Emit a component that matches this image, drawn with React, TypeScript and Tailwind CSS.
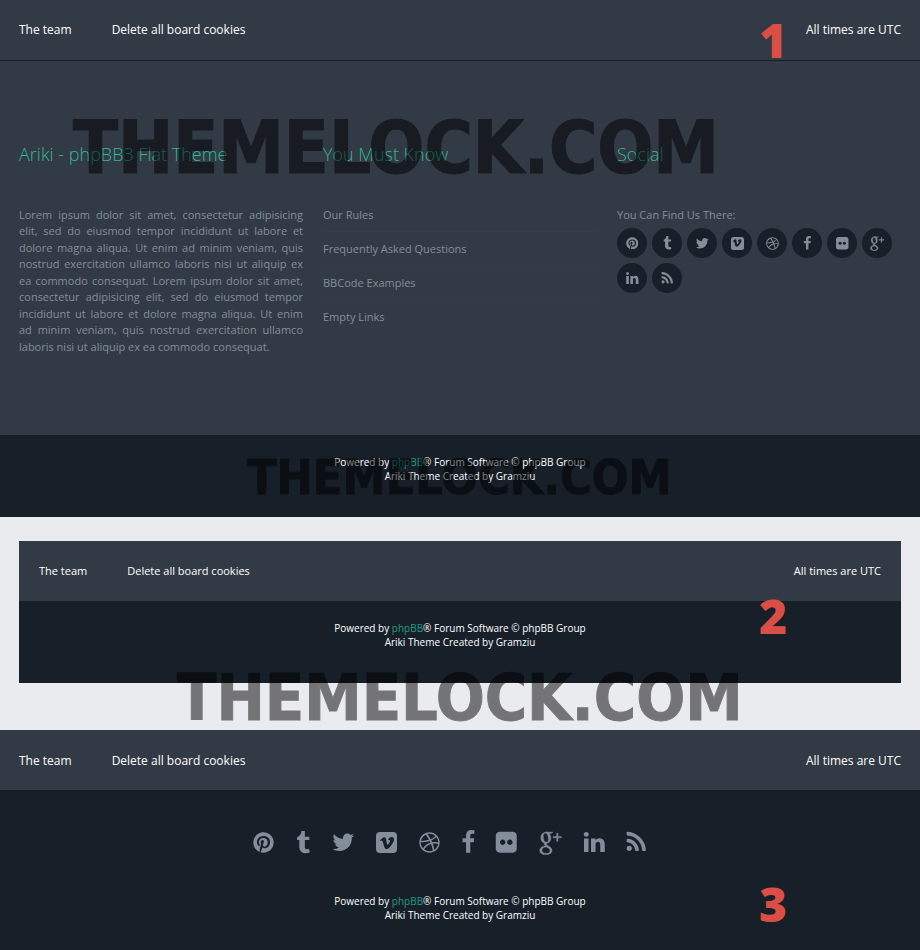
import type { ReactNode } from "react";
import { FaDribbble, FaPinterest, FaVimeoV } from "react-icons/fa";

const glyphs = {
  tumblr:
    "M1328 1329l80 237q-23 35-111 66t-177 32q-104 2-190.500-26t-142.500-74-95-106-55.500-120-16.500-118v-544h-168v-215q72-26 129-69.500t91-90 58-102 34-99 15-88.500q1-5 4.500-8.500t7.500-3.500h244v424h333v252h-334v518q0 30 6.500 56t22.500 52.500 49.500 41.500 81.500 14q78-2 134-29z",
  twitter:
    "M1684 408q-67 98-162 167 1 14 1 42 0 130-38 259.500t-115.500 248.500-184.500 210.500-258 146-323 54.500q-271 0-496-145 35 4 78 4 225 0 401-138-105-2-188-64.500t-114-159.500q33 5 61 5 43 0 85-11-112-23-185.500-111.500t-73.500-205.500v-4q68 38 146 41-66-44-105-115t-39-154q0-88 44-163 121 149 294.500 238.500t371.500 99.500q-8-38-8-74 0-134 94.500-228.500t228.500-94.500q140 0 236 102 109-21 205-78-37 115-142 178 93-10 186-50z",
  facebook:
    "M1343 12v264h-157q-86 0-116 36t-30 108v189h293l-39 296h-254v759h-306v-759h-255v-296h255v-218q0-186 104-288.500t277-102.500q147 0 228 12z",
  linkedin:
    "M477 625v991h-330v-991h330zm21-306q1 73-50.500 122t-135.500 49h-2q-82 0-132-49t-50-122q0-74 51.500-122.500t134.500-48.500 133 48.500 51 122.500zm1166 729v568h-329v-530q0-105-40.500-164.500t-126.500-59.500q-63 0-105.500 34.500t-63.500 85.500q-11 30-11 81v553h-329q2-399 2-647t-1-296l-1-48h329v144h-2q20-32 41-56t56.500-52 87-43.500 114.500-15.500q171 0 275 113.500t104 332.500z",
  rss: "M576 1344q0 80-56 136t-136 56-136-56-56-136 56-136 136-56 136 56 56 136zm512 123q2 28-17 48-18 21-47 21h-135q-25 0-43-16.500t-20-41.500q-22-229-184.500-391.500t-391.500-184.500q-25-2-41.500-20t-16.500-43v-135q0-29 21-47 17-17 43-17h5q160 13 306 80.500t259 181.500q114 113 181.500 259t80.500 306zm512 2q2 27-18 47-18 20-46 20h-143q-26 0-44.500-17.500t-19.500-42.500q-12-215-101-408.500t-231.500-336-336-231.500-408.500-102q-25-1-42.500-19.500t-17.500-43.500v-143q0-28 20-46 18-18 44-18h3q262 13 501.500 120t425.500 294q187 186 294 425.500t120 501.500z",
  flickr:
    "M416 128h960q119 0 203.500 84.500t84.500 203.500v960q0 119-84.500 203.500t-203.500 84.500h-960q-119 0-203.500-84.500t-84.500-203.500v-960q0-119 84.500-203.500t203.500-84.500zM634 696a200 200 0 1 0 0.100 0zM1158 696a200 200 0 1 0 0.100 0z",
};

function Glyph({ name, size }: { name: keyof typeof glyphs; size: number }) {
  return (
    <svg width={size} height={size} viewBox="0 0 1792 1792" fill="currentColor" fillRule="evenodd">
      <path d={glyphs[name]} />
    </svg>
  );
}

function Vimeo({ large = false }: { large?: boolean }) {
  return (
    <span
      className={`flex items-center justify-center bg-[#848e9a] text-[#171f29] ${
        large ? "size-[21px] rounded-[4px]" : "size-[13px] rounded-[2.500px]"
      }`}
    >
      <FaVimeoV size={large ? 16 : 10} />
    </span>
  );
}

function GooglePlus({ size }: { size: number }) {
  return (
    <svg
      width={size}
      height={size}
      viewBox="0 0 24 25"
      fill="currentColor"
      fillRule="evenodd"
      stroke="currentColor"
      strokeWidth="0.5"
    >
      <path d="M6.700 1.200C9.700 1.200 11.800 3.800 11.800 7.300S9.700 12.800 6.600 12.800 1.400 10.400 1.400 7 3.700 1.200 6.700 1.200zM6.200 2.200C4.700 2.200 3.900 3.700 3.900 6.200S5.200 11.800 7 11.800 9.400 10.400 9.400 8.200 8.200 2.200 6.200 2.200z" />
      <path d="M6.500 1.200H14L12.200 2.500H8.600z" />
      <path d="M5.500 12.300L7.800 12.500C6.500 13.800 7 14.300 9.300 15.700C11.800 17.200 13 18.200 13 20.200C13 22.800 10.600 24.600 6.400 24.600C2.600 24.600 0.300 23 0.300 20.500C0.300 17.600 2.800 15.700 6.500 15.600C4.800 14.600 4.600 13.400 5.500 12.300zM7.500 16.600C4.500 16.500 2.500 17.800 2.500 20C2.500 22.200 4.300 23.400 7 23.400C9.700 23.400 11 22.300 11 20.500C11 18.800 9.800 18.200 7.500 16.600z" />
      <path d="M17.900 2.300h1.300v3.500h3.600v1.300h-3.600v3.600h-1.300v-3.600h-3.600V5.800h3.600z" />
    </svg>
  );
}

type Social = { name: string; small: ReactNode; large: ReactNode; width: string };

const socials: Social[] = [
  { name: "Pinterest", small: <FaPinterest size={12.5} />, large: <FaPinterest size={21} />, width: "w-[21px]" },
  {
    name: "Tumblr",
    small: <Glyph name="tumblr" size={14.5} />,
    large: <Glyph name="tumblr" size={24} />,
    width: "w-[14px]",
  },
  {
    name: "Twitter",
    small: <Glyph name="twitter" size={14.5} />,
    large: <Glyph name="twitter" size={24.5} />,
    width: "w-[22px]",
  },
  { name: "Vimeo", small: <Vimeo />, large: <Vimeo large />, width: "w-[21px]" },
  { name: "Dribbble", small: <FaDribbble size={13} />, large: <FaDribbble size={21} />, width: "w-[21px]" },
  {
    name: "Facebook",
    small: <Glyph name="facebook" size={14.5} />,
    large: <Glyph name="facebook" size={24.5} />,
    width: "w-[12px]",
  },
  {
    name: "Flickr",
    small: <Glyph name="flickr" size={14.5} />,
    large: <Glyph name="flickr" size={24.5} />,
    width: "w-[21px]",
  },
  { name: "Google Plus", small: <GooglePlus size={15} />, large: <GooglePlus size={24} />, width: "w-[23px]" },
  {
    name: "LinkedIn",
    small: <Glyph name="linkedin" size={14.5} />,
    large: <Glyph name="linkedin" size={24.5} />,
    width: "w-[21px]",
  },
  { name: "RSS", small: <Glyph name="rss" size={14.5} />, large: <Glyph name="rss" size={24.5} />, width: "w-[19px]" },
];

const links = ["Our Rules", "Frequently Asked Questions", "BBCode Examples", "Empty Links"];

function NavBar({ className }: { className: string }) {
  return (
    <nav className={`flex h-[60px] items-center bg-[#323a45] text-white ${className}`}>
      <a className="mr-10">The team</a>
      <a>Delete all board cookies</a>
      <span className="ml-auto">All times are UTC</span>
    </nav>
  );
}

function Credits({ className }: { className: string }) {
  return (
    <div className={`bg-[#171f29] text-center text-[10px] leading-[14px] text-white ${className}`}>
      <p>
        Powered by <a className="text-[#1f9e7f]">phpBB</a>® Forum Software © phpBB Group
      </p>
      <p>Ariki Theme Created by Gramziu</p>
    </div>
  );
}

function Heading({ children }: { children: ReactNode }) {
  return <h3 className="mb-[41px] text-[18px] leading-6 font-light text-[#32b892]">{children}</h3>;
}

function Watermark({ className }: { className: string }) {
  return (
    <div
      className={`pointer-events-none absolute leading-none font-bold whitespace-nowrap text-black opacity-50 [font-family:'DejaVu_Sans_Condensed','DejaVu_Sans',sans-serif] [font-stretch:condensed] ${className}`}
    >
      THEMELOCK.COM
    </div>
  );
}

function Marker({ value, className }: { value: number; className: string }) {
  return (
    <div className={`absolute text-[48px] leading-[48px] font-extrabold text-[#d94f45] ${className}`}>{value}</div>
  );
}

export default function App() {
  return (
    <main className="relative h-[950px] w-[920px] overflow-hidden bg-[#eaebef] [font-family:'Open_Sans','Noto_Sans',sans-serif]">
      <section>
        <NavBar className="px-[19px] text-[12px]" />
        <div className="grid h-[375px] grid-cols-[284px_274px_284px] gap-x-5 border-t border-[#171f29] bg-[#323a45] px-[19px] pt-[81px] text-[11px] leading-[16.5px] text-[#848e9a]">
          <div>
            <Heading>Ariki - phpBB3 Flat Theme</Heading>
            <p className="-mt-[0.500px] text-justify">
              Lorem ipsum dolor sit amet, consectetur adipisicing elit, sed do eiusmod tempor incididunt ut labore et
              dolore magna aliqua. Ut enim ad minim veniam, quis nostrud exercitation ullamco laboris nisi ut aliquip
              ex ea commodo consequat. Lorem ipsum dolor sit amet, consectetur adipisicing elit, sed do eiusmod tempor
              incididunt ut labore et dolore magna aliqua. Ut enim ad&nbsp;minim veniam, quis nostrud exercitation
              ullamco laboris nisi ut aliquip ex ea commodo consequat.
            </p>
          </div>
          <div>
            <Heading>You Must Know</Heading>
            <ul className="-mt-[9px]">
              {links.map((link) => (
                <li key={link} className="h-[34px] border-b border-[#363d49] leading-[34px] last:border-0">
                  {link}
                </li>
              ))}
            </ul>
          </div>
          <div>
            <Heading>Social</Heading>
            <p>You Can Find Us There:</p>
            <div className="mt-[4.500px] flex flex-wrap gap-[5px]">
              {socials.map((s) => (
                <a
                  key={s.name}
                  aria-label={s.name}
                  className="flex size-[30px] items-center justify-center rounded-full bg-[#171f29]"
                >
                  {s.small}
                </a>
              ))}
            </div>
          </div>
        </div>
        <Credits className="h-[82px] pt-5" />
      </section>

      <section className="mx-[19px] mt-6">
        <NavBar className="px-5 text-[11px]" />
        <Credits className="h-[82px] pt-5" />
      </section>

      <section className="mt-[47px]">
        <NavBar className="px-[19px] pt-[2px] text-[12px]" />
        <div className="flex h-[104px] items-center justify-center gap-[22px] bg-[#171f29] pt-px pr-[21px] text-[#848e9a]">
          {socials.map((s) => (
            <a key={s.name} aria-label={s.name} className={`flex shrink-0 justify-center ${s.width}`}>
              <span className="shrink-0">{s.large}</span>
            </a>
          ))}
        </div>
        <Credits className="h-[56px]" />
      </section>

      <Watermark className="top-[111px] left-[73px] text-[73.300px] [-webkit-text-stroke:1.200px_black]" />
      <Watermark className="top-[453px] left-[247px] text-[48.200px] [-webkit-text-stroke:0.800px_black]" />
      <Watermark className="top-[666px] left-[177px] text-[64.200px] [-webkit-text-stroke:1px_black]" />
      <Marker value={1} className="top-4 left-[759px]" />
      <Marker value={2} className="top-[592px] left-[759px]" />
      <Marker value={3} className="top-[880px] left-[759px]" />
    </main>
  );
}
